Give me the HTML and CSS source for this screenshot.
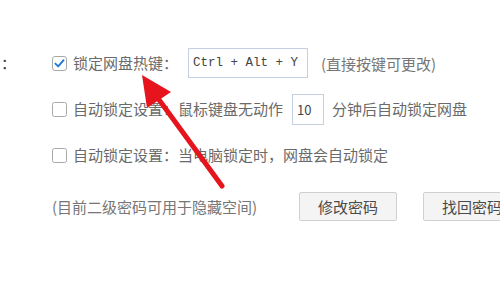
FILE: index.html
```html
<!DOCTYPE html>
<html lang="zh-CN">
<head>
  <meta charset="UTF-8">
  <meta name="viewport" content="width=device-width, initial-scale=1.0">
  <title>网盘安全设置</title>
  <link rel="stylesheet" href="styles.css">
</head>
<body>
  <div class="panel">
    <div class="row row--first">
      <span class="prev-colon">：</span>
      <span class="check check--on">
        <svg width="15" height="15" viewBox="0 0 15 15">
          <rect x="0.5" y="0.5" width="14" height="14" rx="2.5" fill="#fff" stroke="#a9a9a9"/>
          <path d="M3.4 7.6 L6.2 10.4 L11.6 4.2" fill="none" stroke="#1d7ad6" stroke-width="1.9" stroke-linecap="round" stroke-linejoin="round"/>
        </svg>
      </span>
      <span class="label">锁定网盘热键：</span>
      <span class="field field--hotkey">Ctrl + Alt + Y</span>
      <span class="hint">(直接按键可更改)</span>
    </div>
    <div class="row">
      <span class="check"></span>
      <span class="label">自动锁定设置：鼠标键盘无动作</span>
      <span class="field field--minutes">10</span>
      <span class="label label--after">分钟后自动锁定网盘</span>
    </div>
    <div class="row">
      <span class="check"></span>
      <span class="label">自动锁定设置：当电脑锁定时，网盘会自动锁定</span>
    </div>
    <div class="row row--buttons">
      <span class="note">(目前二级密码可用于隐藏空间)</span>
      <button class="button">修改密码</button>
      <button class="button button--next">找回密码</button>
    </div>
  </div>

  <!-- red arrow drawn over the screenshot -->
  <svg class="arrow" width="500" height="302" viewBox="0 0 500 302">
    <line x1="222" y1="186" x2="157" y2="97" stroke="#e5141d" stroke-width="5" stroke-linecap="round"/>
    <polygon points="142,75 171,92 147,108" fill="#e5141d"/>
  </svg>
</body>
</html>
```

FILE: styles.css
```css
body {
  margin: 0;
  width: 500px;
  height: 302px;
  overflow: hidden;
  position: relative;
  background-color: #FFFFFF;
  font-family: "Noto Sans CJK SC", "Noto Sans", sans-serif;
  font-size: 15px;
  color: #6a6a6a;
}

.panel {
  padding-top: 47px;
  padding-left: 52px;
}

.row {
  display: flex;
  align-items: center;
  height: 32px;
  margin-top: 14px;
  white-space: nowrap;
}

.row > * {
  flex: none;
}

.row--first {
  margin-top: 0;
  position: relative;
}

.row--buttons {
  margin-top: 19px;
}

.prev-colon {
  position: absolute;
  left: -51px;
  top: 5px;
  color: #3a3a3a;
}

.check {
  width: 15px;
  height: 15px;
  box-sizing: border-box;
  border: 1px solid #a9a9a9;
  border-radius: 2.5px;
  background-color: #FFFFFF;
  margin-right: 6px;
}

.check--on {
  border: none;
}

.check svg {
  display: block;
}

.label {
  line-height: 20px;
}

.label--after {
  margin-left: 8px;
}

.field {
  box-sizing: border-box;
  border: 1px solid #c3d0e2;
  background-color: #FFFFFF;
  display: flex;
  align-items: center;
  color: #444444;
}

.field--hotkey {
  width: 120px;
  height: 30px;
  margin-left: 10px;
  padding-left: 4px;
  font-family: "Liberation Mono", monospace;
  font-size: 12.5px;
}

.field--minutes {
  width: 32px;
  height: 31px;
  margin-left: 9px;
  padding-left: 4px;
  font-size: 13px;
}

.hint {
  margin-left: 13px;
  color: #767676;
}

.note {
  width: 247px;
  color: #767676;
}

.button {
  width: 98px;
  height: 29px;
  border: 1px solid #d0d0d0;
  border-radius: 2px;
  background-color: #F4F4F4;
  font-family: "Noto Sans CJK SC", sans-serif;
  font-size: 15px;
  color: #4a4a4a;
  padding: 0;
}

.button--next {
  margin-left: 26px;
}

.arrow {
  position: absolute;
  left: 0;
  top: 0;
}
```
